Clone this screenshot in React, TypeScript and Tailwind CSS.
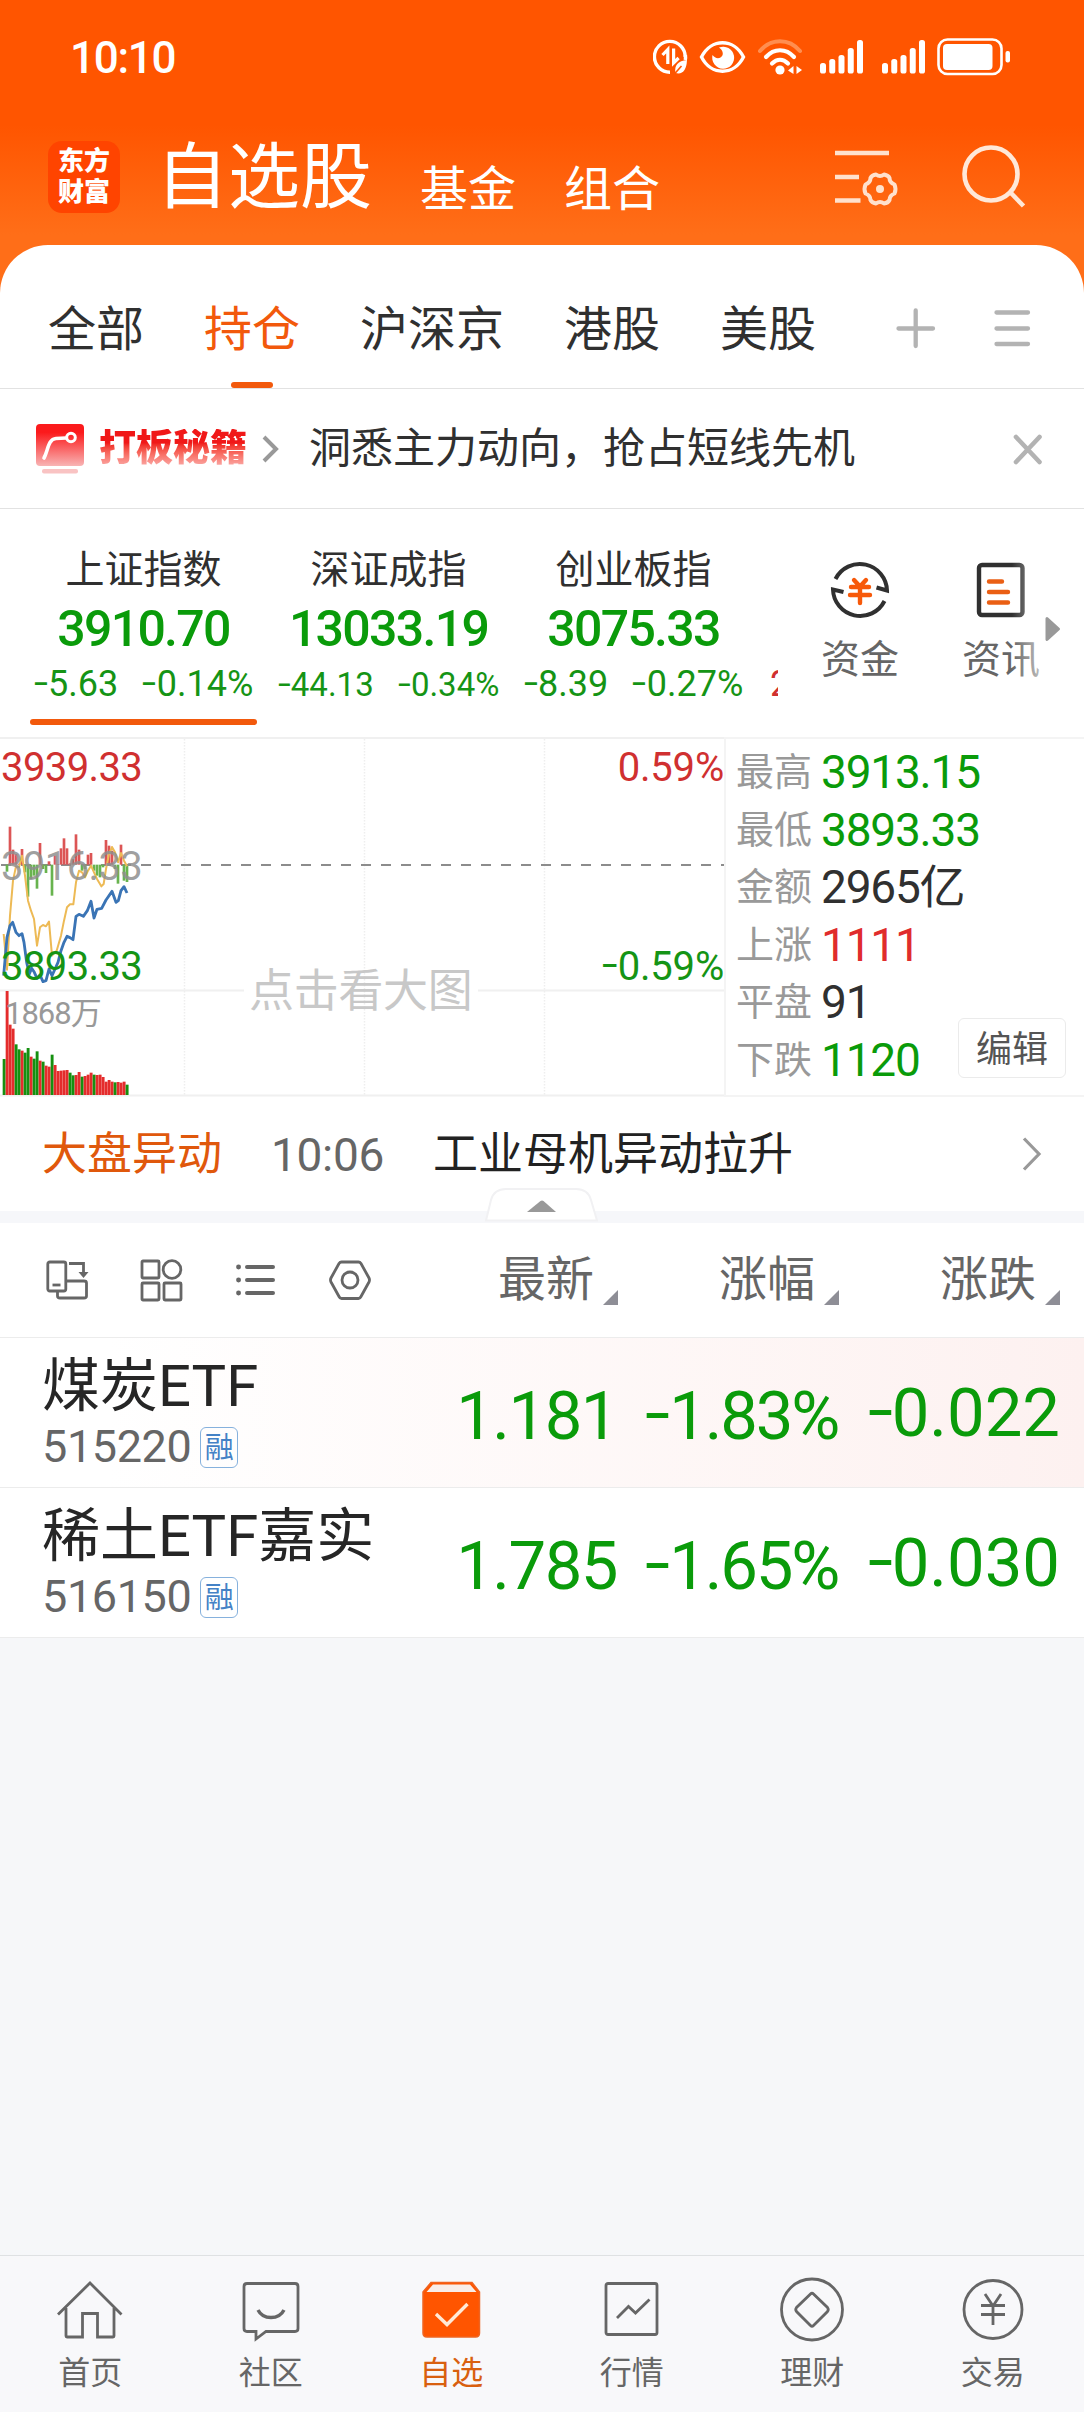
import type { ReactNode } from "react";

/* ---------- shared text helpers ---------- */

function Num({ value, wide = false }: { value: string; wide?: boolean }) {
  if (!value.startsWith("-")) return <>{value}</>;
  return (
    <>
      <span
        className={
          wide
            ? "inline-block w-[0.36em] origin-left -translate-y-[0.04em] scale-x-[1.35] text-left tracking-normal"
            : "inline-block w-[0.4em] origin-left -translate-y-[0.04em] scale-x-[1.4] text-left tracking-normal"
        }
      >
        -
      </span>
      {value.slice(1)}
    </>
  );
}

/* ---------- status bar ---------- */

function Signal() {
  const tops = [23, 19, 15, 8, 0];
  return (
    <svg width="44" height="34" viewBox="0 0 44 34" fill="#fff">
      {tops.map((t, i) => (
        <rect key={i} x={i * 9.25} y={t} width="6" height={33.5 - t} rx="2.6" />
      ))}
    </svg>
  );
}

function StatusBar() {
  return (
    <div className="flex h-[114px] items-center pl-[70px] pr-[73px] text-white">
      <span className="mt-px text-[44px] font-medium tracking-[-1.300px]">10:10</span>
      <div className="ml-auto flex items-center">
        <svg width="35" height="36" viewBox="0 0 35 36" fill="none" stroke="#fff">
          <path d="M32.2 18A15.4 15.4 0 1 0 17 33.2" strokeWidth="3.4" />
          <path d="M32.3 21A15.4 15.4 0 0 0 32.4 16" strokeWidth="3.4" />
          <path d="M14.8 25V10.5L9.5 16" strokeWidth="3.2" />
          <path d="M20.6 9.5V24l5-5" strokeWidth="3.2" />
          <path d="M34 21c-9 1-13 5-11.500 13 7 2 11-3 11.500-13Z" fill="#fff" stroke="none" />
          <path d="M20.500 36l8-9" stroke="#ff5500" strokeWidth="1.600" />
        </svg>
        <svg className="ml-[11px]" width="47" height="34" viewBox="0 0 47 34">
          <path d="M2.500 17C12-2 35-2 44.500 17C35 36 12 36 2.500 17Z" fill="none" stroke="#fff" strokeWidth="3.400" />
          <path d="M20 7.500A11 11 0 1 1 13.500 15c2 3 5.500 4 8 2.500 3.500-2 3-7-1.500-10Z" fill="#fff" />
        </svg>
        <svg className="ml-[12px]" width="44" height="36" viewBox="0 0 44 36" fill="none" stroke="#fff" strokeLinecap="round">
          <path d="M2 12C13-1 31-1 42 12" strokeWidth="4" stroke="#ff8e50" />
          <path d="M8 18C16 9 28 9 36 18" strokeWidth="4.200" />
          <path d="M14 24.500C19 19.500 25 19.500 30 24.500" strokeWidth="4.200" />
          <circle cx="22" cy="31" r="4.600" fill="#fff" stroke="none" />
          <path d="M35.500 27v8l-5.500-3.500zM38.500 35v-8l5.500 4z" fill="#fff" stroke="none" />
        </svg>
        <div className="ml-[18px] flex gap-[18px]">
          <Signal />
          <Signal />
        </div>
        <svg className="ml-[11px]" width="74" height="38" viewBox="0 0 74 38">
          <rect x="1.500" y="1.500" width="63" height="34.500" rx="9" fill="none" stroke="#fff" strokeWidth="2.600" />
          <rect x="6" y="6" width="49.500" height="26" rx="4" fill="#fff" />
          <rect x="68.500" y="13" width="4.500" height="11.500" rx="2" fill="#fff" />
        </svg>
      </div>
    </div>
  );
}

/* ---------- orange header ---------- */

function Header() {
  return (
    <div className="flex h-[131px] pl-12 text-white">
      <div className="mt-[27px] flex h-[72px] w-[72px] flex-col items-center justify-center rounded-[14px] bg-[#ff4400] text-[26px] font-black leading-[31px]">
        <span>东方</span>
        <span>财富</span>
      </div>
      <span className="ml-9 mt-[28px] text-[72px] leading-[72px]">自选股</span>
      <span className="ml-12 mt-[52px] text-[48px] leading-[48px]">基金</span>
      <span className="ml-12 mt-[52px] text-[48px] leading-[48px]">组合</span>
      <svg className="ml-[175px] mt-[35px]" width="64" height="58" viewBox="0 0 64 58" fill="none" stroke="#ffe1cd">
        <path d="M0 4H54M0 28H24M0 51.500H25.500" strokeWidth="4.600" />
        <path
          d="M41 25.500Q45 28.500 49 25.500Q53.500 26.500 54.500 29Q54.500 33.500 59.500 35.500Q61.500 40 59.500 44.500Q54.500 46.500 54.500 51Q53 54 49 54.500Q45 51.500 41 54.500Q36.500 53.500 35.500 51Q35.500 46.500 30.500 44.500Q28.500 40 30.500 35.500Q35.500 33.500 35.500 29Q37 26 41 25.500Z"
          strokeWidth="4"
          strokeLinejoin="round"
        />
        <circle cx="45" cy="40" r="4" fill="#ffe1cd" stroke="none" />
      </svg>
      <svg className="ml-[63px] mt-[30px]" width="64" height="66" viewBox="0 0 64 66" fill="none" stroke="#ffe8d8" strokeWidth="4.600">
        <circle cx="29" cy="30" r="26.500" />
        <path d="M48 48L61.500 62" />
      </svg>
    </div>
  );
}

/* ---------- group tabs ---------- */

function Tabs() {
  const tabs = ["全部", "持仓", "沪深京", "港股", "美股"];
  return (
    <div className="flex h-36 gap-[60px] rounded-t-[48px] border-b border-[#e2e2e2] bg-white pl-12 text-[48px] text-[#303030]">
      {tabs.map((t) =>
        t === "持仓" ? (
          <div key={t} className="flex flex-col items-center text-[#f2590c]">
            <span className="mt-[61px] leading-[48px]">{t}</span>
            <div className="mt-[28px] h-[6px] w-[42px] rounded-full bg-[#f2590c]" />
          </div>
        ) : (
          <span key={t} className="mt-[61px] leading-[48px]">{t}</span>
        ),
      )}
      <svg className="ml-[20px] mt-[63px]" width="40" height="42" viewBox="0 0 40 42" stroke="#b3b3b3" strokeWidth="4.300" strokeLinecap="round">
        <path d="M2.500 20.500H37M19.700 2.500V38" />
      </svg>
      <svg className="-ml-[2px] mt-[63px]" width="38" height="42" viewBox="0 0 38 42" stroke="#b3b3b3" strokeWidth="4.300" strokeLinecap="round">
        <path d="M2.500 4.500H34M2.500 20.500H34M2.500 36H34" />
      </svg>
    </div>
  );
}

/* ---------- promo strip ---------- */

function Promo() {
  return (
    <div className="flex h-[120px] items-center border-b border-[#e2e2e2] bg-white pl-9">
      <svg width="48" height="50" viewBox="0 0 48 50">
        <defs>
          <linearGradient id="promo" x1="0" y1="0" x2="0" y2="1">
            <stop offset=".2" stopColor="#fb1a1c" />
            <stop offset="1" stopColor="#f8b4b4" />
          </linearGradient>
        </defs>
        <rect width="48" height="42" rx="4" fill="url(#promo)" />
        <rect x="6" y="45" width="36" height="4.600" rx="2" fill="#f9c3c3" />
        <path d="M8 34C12 27 12 15 20 14.500L30 14" fill="none" stroke="#fff" strokeWidth="3.600" strokeLinecap="round" />
        <circle cx="35" cy="13.500" r="4.300" fill="none" stroke="#fff" strokeWidth="3" />
      </svg>
      <span className="ml-[15px] w-[149px] whitespace-nowrap bg-linear-to-b from-[#f01818] from-35% to-[#f9b4b4] bg-clip-text text-[37px] font-black leading-[40px] text-transparent">
        打板秘籍
      </span>
      <svg className="ml-[14px]" width="18" height="30" viewBox="0 0 18 30" fill="none" stroke="#999" strokeWidth="4">
        <path d="M2 3L14 15L2 27" />
      </svg>
      <span className="ml-[29px] text-[42px] text-[#303030]">洞悉主力动向，抢占短线先机</span>
      <svg className="ml-auto mr-[41px] mt-[2px]" width="30" height="31" viewBox="0 0 30 31" stroke="#b3b3b3" strokeWidth="4.600" strokeLinecap="round">
        <path d="M3 3L26.500 28M26.500 3L3 28" />
      </svg>
    </div>
  );
}

/* ---------- index cards ---------- */

const indices = [
  { name: "上证指数", price: "3910.70", diff: "-5.63", pct: "-0.14%", active: true, small: false },
  { name: "深证成指", price: "13033.19", diff: "-44.13", pct: "-0.34%", active: false, small: true },
  { name: "创业板指", price: "3075.33", diff: "-8.39", pct: "-0.27%", active: false, small: false },
];

function Indices() {
  return (
    <div className="flex h-[228px] bg-white">
      <div className="flex w-[778px] overflow-hidden pl-[21px]">
        {indices.map((s) => (
          <div key={s.name} className="flex w-[245px] shrink-0 flex-col items-center whitespace-nowrap">
            <span className="mt-[40px] text-[39px] leading-[42px] text-[#303030]">{s.name}</span>
            <span className="mt-[13px] text-[50px] font-medium leading-[50px] tracking-[-1.700px] text-[#0a9b0a]">{s.price}</span>
            <div
              className={
                s.small
                  ? "mt-[11px] flex h-[40px] items-center gap-[24px] text-[33px] text-[#159415]"
                  : "mt-[10px] flex h-[40px] items-center gap-[24px] text-[36px] text-[#159415]"
              }
            >
              <span><Num value={s.diff} /></span>
              <span><Num value={s.pct} /></span>
            </div>
            {s.active && <div className="mt-[15px] h-[6px] w-[227px] rounded-full bg-[#f2590c]" />}
          </div>
        ))}
        <span className="mt-[155px] shrink-0 pl-[14px] text-[36px] leading-[40px] text-[#d03030]">2.15</span>
      </div>
      <div className="ml-[21px] flex w-[122px] flex-col items-center text-[39px] text-[#666]">
        <svg className="mt-[50px]" width="62" height="62" viewBox="0 0 62 62" fill="none" stroke="#303030" strokeWidth="4">
          <path d="M6.500 20A27.200 27.200 0 0 1 58 31.500L47.500 28.500" />
          <path d="M55.500 42A27.200 27.200 0 0 1 4 30.500L14.500 33" />
          <path d="M25 21L31 27.500L37 21M22 28H40M21 36H41M31 27.500V44" stroke="#f7590a" strokeLinecap="round" strokeWidth="4.400" />
        </svg>
        <span className="mt-[18px] leading-[42px]">资金</span>
      </div>
      <div className="relative ml-[19px] flex w-[122px] flex-col items-center text-[39px] text-[#666]">
        <svg className="mt-[53px]" width="50" height="56" viewBox="0 0 50 56" fill="none" strokeWidth="4.400">
          <rect x="3" y="3" width="43.500" height="50" rx="3" stroke="#303030" />
          <path d="M13 19.500H26M13 30H32M13 40.500H32" stroke="#ea5f14" strokeLinecap="round" />
        </svg>
        <span className="mt-[21px] leading-[42px]">资讯</span>
        <div className="absolute right-[20px] top-[40px] h-[150px] w-[30px] bg-linear-to-r from-white/0 to-white/60" />
      </div>
      <svg className="-ml-[17px] mt-[107px]" width="16" height="26" viewBox="0 0 16 26">
        <path d="M2 2.500L13.500 13L2 23.500Z" fill="#999" stroke="#999" strokeWidth="3" strokeLinejoin="round" />
      </svg>
    </div>
  );
}

/* ---------- intraday chart ---------- */

const volume =
  "g990 r786 r887 r899 g946 g961 r965 g971 g957 r983 g989 g967 r995 g998 r1010 r1013 g977 r1008 r1026 r1025 r1024 r1023 g1031 g1039 r1038 r1029 g1043 r1041 r1037 r1031 g1037 r1038 r1037 r1044 r1058 r1053 r1058 g1060 r1059 r1061 r1058 g1067".split(" ");

const strength = [
  407, 428, 293, 362, 375, 404, 360, 430, 503, 450, 440, 479, 342, 420, 432, 397, 500, 380, 405, 358, 328, 358, 403, 390,
  316, 362, 425, 420, 377, 372, 425, 440, 445, 415, 333, 350, 365, 420, 464, 347, 455, 459,
];

const yellowLine =
  "11,615 21,722 30,560 39,455 48,412 57,415 66,380 75,440 84,515 93,545 102,570 111,650 120,595 129,588 138,592 147,578 156,680 170,665 183,620 192,575 201,535 210,526 220,526 228,460 237,425 246,430 255,445 264,425 273,410 282,430 291,450 304,472 311,465 318,420 327,375 336,354 345,370 354,400 363,372 372,395 381,412";

const blueLine =
  "11,740 21,625 30,590 38,580 48,610 57,620 66,614 72,640 80,700 88,735 95,718 103,730 111,748 120,738 129,758 138,755 147,720 156,740 165,720 174,700 183,665 192,640 201,622 210,626 219,632 228,562 237,556 250,562 262,545 273,517 282,567 291,541 305,538 318,513 336,487 348,520 355,515 363,485 372,473 381,492";

function Chart() {
  return (
    <div className="relative h-[360px] w-[726px] shrink-0 border-r-2 border-[#f4f4f4] text-[40px] leading-[40px] tracking-[-0.600px]">
      <svg className="block" width="724" height="360" viewBox="0 0 724 360" fill="none">
        <path d="M0 1H724M0 253.500H244M478 253.500H724M0 358.500H724" stroke="#f0f0f0" strokeWidth="2" />
        <path d="M184.500 2V358M364.500 2V358M544.500 2V358" stroke="#eeeeee" strokeWidth="1.500" strokeDasharray="1.500 1.500" />
        <path d="M1 128H724" stroke="#8c8c8c" strokeWidth="2" strokeDasharray="10 10" />
        <g transform="scale(.33333) translate(0 -24)">
          {strength.map((v, i) => (
            <rect
              key={i}
              x={8 + i * 9}
              y={Math.min(v, 407)}
              width="8"
              height={Math.abs(v - 407)}
              fill={v < 407 ? "#dc5555" : "#68b34e"}
            />
          ))}
          <polyline points={yellowLine} stroke="#edba55" strokeWidth="6" strokeLinejoin="round" />
          <polyline points={blueLine} stroke="#3a74b5" strokeWidth="8.500" strokeLinejoin="round" />
          {volume.map((v, i) => {
            const top = Number(v.slice(1));
            return (
              <rect key={i} x={8 + i * 9} y={top} width="8.700" height={1098 - top} fill={v[0] === "r" ? "#e42c2c" : "#159010"} />
            );
          })}
        </g>
      </svg>
      <span className="absolute left-px top-[11px] text-[#d03030]">3939.33</span>
      <span className="absolute left-px top-[110px] text-[#8f8f8f]/85">3916.33</span>
      <span className="absolute left-px top-[210px] text-[#159415]">3893.33</span>
      <span className="absolute right-0 top-[11px] tracking-[-0.200px] text-[#d03030]">0.59%</span>
      <span className="absolute right-0 top-[210px] tracking-[-0.200px] text-[#159415]"><Num value="-0.59%" /></span>
      <span className="absolute left-[5px] top-[257px] text-[31px] tracking-[-1px] text-[#999]">1868万</span>
      <span className="absolute left-[249px] top-[232px] text-[45px] leading-[45px] tracking-[-0.300px] text-[#c8c8c8]">点击看大图</span>
    </div>
  );
}

const stats = [
  { label: "最高", value: "3913.15", color: "text-[#0a9b0a]" },
  { label: "最低", value: "3893.33", color: "text-[#0a9b0a]" },
  { label: "金额", value: "2965亿", color: "text-[#303030]" },
  { label: "上涨", value: "1111", color: "text-[#e02c2c]" },
  { label: "平盘", value: "91", color: "text-[#303030]" },
  { label: "下跌", value: "1120", color: "text-[#0a9b0a]" },
];

function Market() {
  return (
    <div className="flex h-[360px] bg-white">
      <Chart />
      <div className="relative flex-1 border-y-2 border-[#f4f4f4] pl-[10px] pt-[5px]">
        {stats.map((s) => (
          <div key={s.label} className="flex h-[57.500px] items-center">
            <span className="w-[85px] text-[38px] text-[#999]">{s.label}</span>
            <span className={s.color + " text-[46px] tracking-[-1.200px]"}>{s.value}</span>
          </div>
        ))}
        <button className="absolute bottom-[17px] right-[18px] h-[60px] w-[108px] rounded-[6px] border border-[#ebebeb] bg-white pt-[3px] text-[36px] leading-[56px] text-[#555]">
          编辑
        </button>
      </div>
    </div>
  );
}

/* ---------- market movement ticker ---------- */

function Ticker() {
  return (
    <div className="relative h-[126px] border-b-[12px] border-[#f6f7fa] bg-white">
      <div className="flex h-[114px] items-center pl-[42px] pt-[2px] text-[45px]">
        <span className="text-[#e0580c]">大盘异动</span>
        <span className="ml-[49px] text-[46px] tracking-[-0.300px] text-[#666]">10:06</span>
        <span className="ml-[49px] text-[#222]">工业母机异动拉升</span>
        <svg className="mb-[2px] ml-auto mr-[42px]" width="20" height="36" viewBox="0 0 20 36" fill="none" stroke="#999" strokeWidth="3.200">
          <path d="M2 2.500L17 18L2 33.500" />
        </svg>
      </div>
      <svg className="absolute left-[484px] top-[90px]" width="116" height="36" viewBox="0 0 116 36">
        <path d="M2 33.500L7 13Q10 2 22 2H92Q104 2 107 13L113 33.500Z" fill="#fff" stroke="#f1f1f3" strokeWidth="2" />
        <path d="M43 25L56.500 14Q58 13 59.500 14L72 25Z" fill="#999" />
      </svg>
    </div>
  );
}

/* ---------- watch list ---------- */

function ColumnHead({ label }: { label: string }) {
  return (
    <div className="flex w-[221px] justify-end">
      <span className="text-[48px] leading-[114px]">{label}</span>
      <svg className="ml-[9px] mt-[67px]" width="15" height="15" viewBox="0 0 15 15">
        <path d="M15 0V15H0Z" fill="#8e8e96" />
      </svg>
    </div>
  );
}

function ListHead() {
  return (
    <div className="flex h-[115px] border-b border-[#ececec] bg-white pr-6 text-[#666]">
      <div className="flex items-center gap-[51px] pl-[45px]">
        <svg width="44" height="44" viewBox="0 0 44 44" fill="none" stroke="#666" strokeWidth="2.800">
          <rect x="2.800" y="4" width="18" height="29" rx="2" />
          <path d="M7.500 27H15.500" />
          <path d="M12.500 33V38Q12.500 40 15 40H39Q41.500 40 41.500 38V25Q41.500 23 39 23H21" />
          <path d="M24 5.500H38.500V14" />
          <path d="M33.500 14H43.500L38.500 20Z" fill="#666" stroke="none" />
        </svg>
        <svg width="43" height="44" viewBox="0 0 43 44" fill="none" stroke="#666" strokeWidth="2.800">
          <rect x="2" y="3" width="17" height="17" rx="1" />
          <circle cx="32" cy="11.500" r="8.800" />
          <rect x="2" y="25" width="17" height="17" rx="1" />
          <rect x="24" y="25" width="17" height="17" rx="1" />
        </svg>
        <svg width="43" height="44" viewBox="0 0 43 44" stroke="#666" strokeWidth="4" strokeLinecap="round">
          <path d="M13 9H39M13 22H39M13 35H39" />
          <path d="M4.500 9h.100M4.500 22h.100M4.500 35h.100" strokeWidth="4.800" />
        </svg>
        <svg width="44" height="44" viewBox="0 0 44 44" fill="none" stroke="#666" strokeWidth="2.800">
          <path d="M13.500 4H30.500Q32 4 33 5.500L41 20Q42 22 41 24L33 38.500Q32 40.500 30.500 40.500H13.500Q12 40.500 11 38.500L3 24Q2 22 3 20L11 5.500Q12 4 13.500 4Z" />
          <circle cx="22" cy="22" r="8" />
        </svg>
      </div>
      <div className="ml-auto flex">
        <ColumnHead label="最新" />
        <ColumnHead label="涨幅" />
        <ColumnHead label="涨跌" />
      </div>
    </div>
  );
}

const stocks = [
  { name: "煤炭ETF", code: "515220", price: "1.181", pct: "-1.83%", diff: "-0.022", hot: true },
  { name: "稀土ETF嘉实", code: "516150", price: "1.785", pct: "-1.65%", diff: "-0.030", hot: false },
];

function StockRow({ stock }: { stock: (typeof stocks)[number] }) {
  return (
    <div
      className={
        stock.hot
          ? "flex h-[150px] border-b border-[#ececec] bg-linear-to-r from-white from-10% to-[#fdf1f0] pl-[42px] pr-[24px]"
          : "flex h-[150px] border-b border-[#ececec] bg-white pl-[42px] pr-[24px]"
      }
    >
      <div className="flex w-[380px] flex-col">
        <span className="mt-[18px] text-[58px] leading-[60px] text-[#262626]">{stock.name}</span>
        <div className="mt-[9px] flex items-center">
          <span className="text-[45px] leading-[44px] tracking-[-0.400px] text-[#666]">{stock.code}</span>
          <span className="ml-[9px] h-[41px] w-[38px] rounded-[6px] border-[1.500px] border-[#86b1dd] text-center text-[29px] leading-[40px] text-[#4482c6]">
            融
          </span>
        </div>
      </div>
      <div className="ml-auto flex text-right text-[67px] leading-[68px] text-[#0a9b0a]">
        <span className="mt-[44px] tracking-[-1.500px]">{stock.price}</span>
        <span className="mt-[44px] w-[221px] tracking-[-2.200px]"><Num value={stock.pct} wide /></span>
        <span className="mt-[41px] w-[222px]"><Num value={stock.diff} wide /></span>
      </div>
    </div>
  );
}

/* ---------- bottom navigation ---------- */

const navItems: { label: string; active?: boolean; icon: ReactNode }[] = [
  {
    label: "首页",
    icon: <path d="M1 38.500L33 7L64.500 38.500M9 32V60Q9 61 10 61H25.500V37.500H40.500V61H56Q57 61 57 60V32" />,
  },
  {
    label: "社区",
    icon: (
      <>
        <path d="M9 7.500H57Q60 7.500 60 10.500V52.500Q60 55.500 57 55.500H28L18 63V55.500H9Q6 55.500 6 52.500V10.500Q6 7.500 9 7.500Z" />
        <path d="M20 34C25 44 41 44 46 34" strokeWidth="3.400" />
      </>
    ),
  },
  {
    label: "自选",
    active: true,
    icon: (
      <>
        <path d="M5 16L13 6.500H54L61.500 16V57Q61.500 61 57.500 61H9Q5 61 5 57Z" fill="#ff5500" stroke="#ef6420" strokeWidth="1.500" />
        <path d="M8.500 16L15 8.500H52L58.500 16Z" fill="#f8ede8" stroke="none" />
        <path d="M18 38L29 48.500L49.500 28" stroke="#ffe9d6" strokeWidth="3.400" />
      </>
    ),
  },
  {
    label: "行情",
    icon: (
      <>
        <rect x="7" y="7.500" width="51" height="51" rx="2" />
        <path d="M18 42L29.500 30.500L36.500 37L50.500 23.500" />
      </>
    ),
  },
  {
    label: "理财",
    icon: (
      <>
        <circle cx="33" cy="33.500" r="30.500" />
        <path d="M31.500 18Q33 16.500 34.500 18L48.500 31.500Q50 33.500 48.500 35.500L34.500 49.500Q33 51 31.500 49.500L17.500 35.500Q16 33.500 17.500 31.500Z" />
      </>
    ),
  },
  {
    label: "交易",
    icon: (
      <>
        <circle cx="33" cy="33.500" r="29" />
        <path d="M25 18L33 30L41 18M21 29.500H45M21 38.500H45M33 29V49" />
      </>
    ),
  },
];

function BottomNav() {
  return (
    <nav className="grid h-[157px] grid-cols-6 border-t border-[#dfe1e3] bg-[#f8f8fa] pr-px">
      {navItems.map((n) => (
        <div key={n.label} className={n.active ? "flex flex-col items-center text-[#d9600f]" : "flex flex-col items-center text-[#666]"}>
          <svg className="mt-[20px]" width="66" height="66" viewBox="0 0 66 66" fill="none" stroke="#666" strokeWidth="2.800">
            {n.icon}
          </svg>
          <span className="mt-[13px] text-[32px] leading-[36px]">{n.label}</span>
        </div>
      ))}
    </nav>
  );
}

export default function App() {
  return (
    <div className="flex h-[2412px] w-[1084px] flex-col overflow-hidden bg-[#f6f7f9] font-[Roboto,'Noto_Sans_CJK_SC',sans-serif]">
      <div className="bg-[linear-gradient(to_bottom,#ff5500_0px,#ff5500_125px,#ff6e18_235px,#ff6e18_100%)]">
        <StatusBar />
        <Header />
        <Tabs />
      </div>
      <Promo />
      <Indices />
      <Market />
      <Ticker />
      <ListHead />
      {stocks.map((s) => (
        <StockRow key={s.code} stock={s} />
      ))}
      <div className="flex-1" />
      <BottomNav />
    </div>
  );
}
